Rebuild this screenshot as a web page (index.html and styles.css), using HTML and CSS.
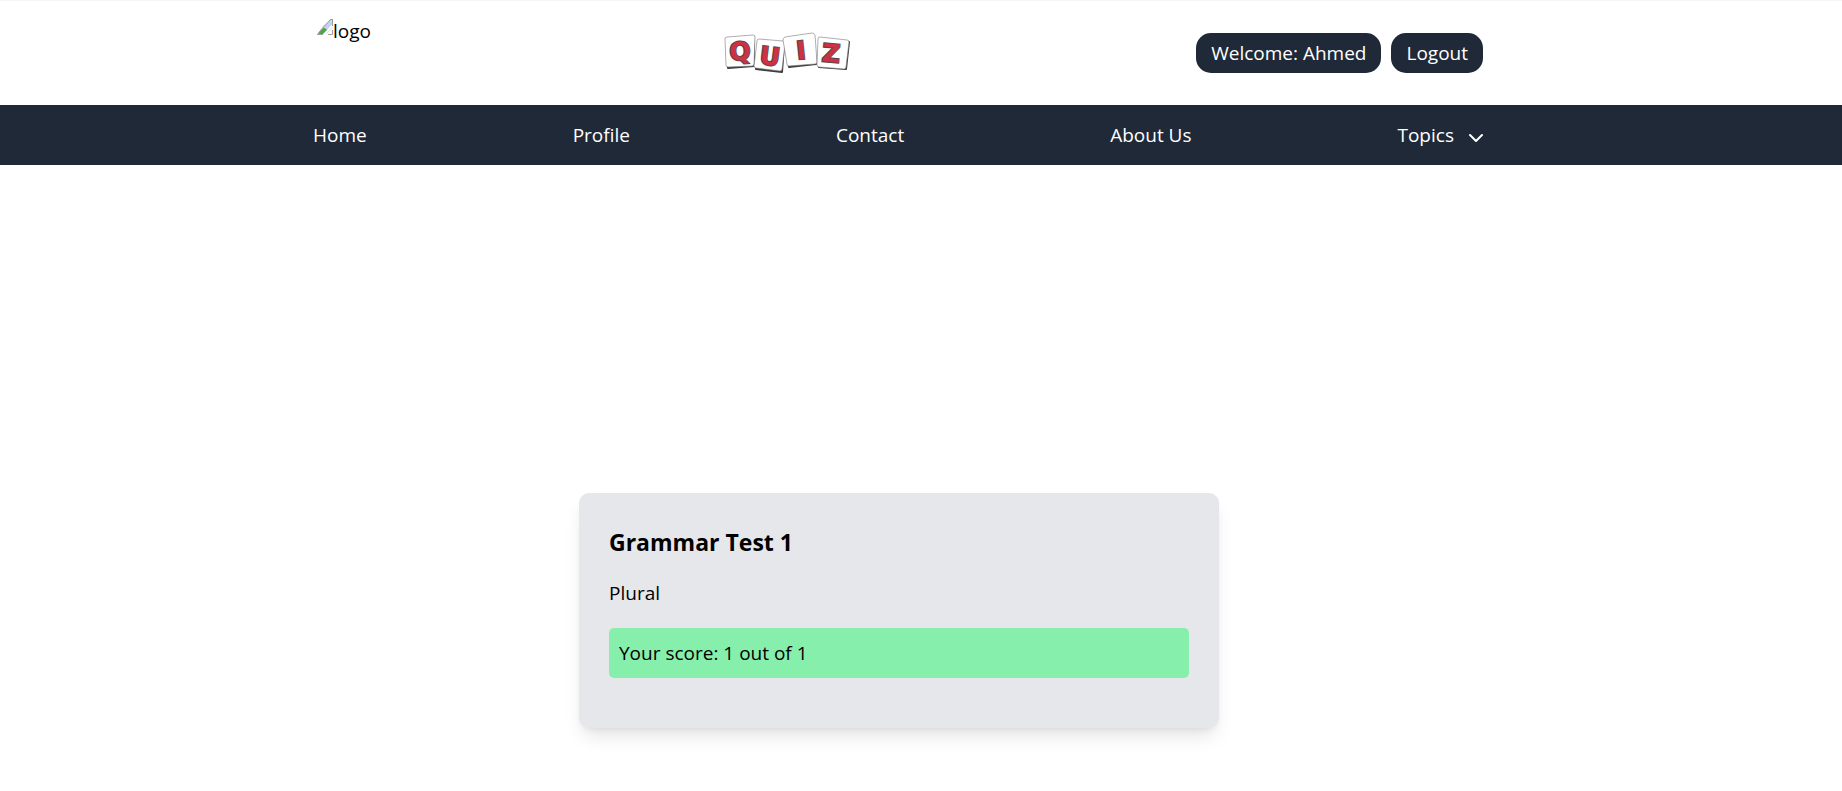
FILE: index.html
```html
<!DOCTYPE html>
<html lang="en">
<head>
  <meta charset="utf-8">
  <meta name="viewport" content="width=device-width, initial-scale=1">
  <title>Quiz</title>
  <link rel="stylesheet" href="styles.css">
</head>
<body>
  <header class="header">
    <div class="container header-row">
      <a class="logo" href="#">
        <svg class="logo-icon" viewBox="0 0 16 16" aria-hidden="true">
          <path d="M13 1h2.500v8L9 15H1L6 7z" fill="#c3d3f3"/>
          <path d="M1 15Q4 9 7 9Q9 9 10 11L6 15z" fill="#4fa83d"/>
          <path d="M15.500 8L8 15.500H6L15.500 5z" fill="#fff"/>
          <path d="M1 14.500L13 1M15.500 1V7M13 .5H16M0 15.500H6M11 15.500H15.500V11" fill="none" stroke="#a0a0a4"/>
        </svg><span>logo</span>
      </a>
      <svg class="quiz-logo" viewBox="0 0 128 44" role="img" aria-label="Quiz">
        <g fill="#3c3c3c" stroke="#3c3c3c" stroke-width="2" stroke-linejoin="round">
          <path d="M4 8L31 6L31 35L5 37z"/>
          <path d="M36 10L61 13L59 41L33 38z"/>
          <path d="M63 8L90 4L93 33L66 36z"/>
          <path d="M98 8L126 11L123 38L96 36z"/>
        </g>
        <g fill="#fff" stroke="#777" stroke-width=".6">
          <path d="M4 6L30 4Q32 4 32 6L31 33Q31 35 29 35L5 36Q3 36 3 34L2 8Q2 6 4 6z"/>
          <path d="M36 8L60 10Q62 11 62 13L59 38Q59 40 57 40L33 37Q31 37 31 35L34 10Q34 8 36 8z"/>
          <path d="M62 6L89 2Q91 2 92 4L94 31Q94 33 92 33L66 35Q64 35 64 33L60 9Q60 7 62 6z"/>
          <path d="M97 6L124 9Q126 9 126 11L123 36Q123 38 121 38L96 36Q94 36 94 34L95 8Q95 6 97 6z"/>
        </g>
        <g class="quiz-letters">
          <text x="17" y="29" transform="rotate(-3 17 20)">Q</text>
          <text x="47" y="34" transform="rotate(7 47 25)">U</text>
          <text x="78" y="28" transform="rotate(-6 78 19)">I</text>
          <text x="108" y="31" transform="rotate(5 108 22)">Z</text>
        </g>
      </svg>
      <div class="actions">
        <button class="pill" type="button">Welcome: Ahmed</button>
        <button class="pill" type="button">Logout</button>
      </div>
    </div>
  </header>
  <nav class="nav">
    <div class="container nav-row">
      <a href="#">Home</a>
      <a href="#">Profile</a>
      <a href="#">Contact</a>
      <a href="#">About Us</a>
      <button class="topics" type="button">Topics
        <svg class="chevron" viewBox="0 0 14 10" aria-hidden="true"><path d="M1 2L7 8L13 2"/></svg>
      </button>
    </div>
  </nav>
  <main class="main">
    <section class="card">
      <h1>Grammar Test 1</h1>
      <p class="subject">Plural</p>
      <p class="score">Your score: 1 out of 1</p>
    </section>
  </main>
</body>
</html>
```
FILE: styles.css
```css
* {
  box-sizing: border-box;
}

body {
  margin: 0;
  background: #fff;
  color: #000;
  font-family: "Segoe UI", "Open Sans", "Noto Sans", sans-serif;
  font-size: 19px;
  line-height: 30px;
}

a {
  color: inherit;
  text-decoration: none;
}

button {
  border: 0;
  color: #fff;
  font: inherit;
  cursor: pointer;
}

.header,
.nav {
  padding-right: 46px;
}

.header {
  border-top: 1px solid #f3f6f7;
}

.container {
  max-width: 1170px;
  margin: 0 auto;
}

.header-row {
  display: flex;
  justify-content: space-between;
  align-items: center;
  height: 104px;
}

.logo {
  display: flex;
  align-self: flex-start;
  width: 64px;
  padding: 15px 4px;
}

.logo-icon {
  flex: none;
  width: 16px;
  height: 16px;
  margin-top: 3px;
}

.quiz-logo {
  width: 128px;
  height: 44px;
}

.quiz-letters {
  fill: #cf3043;
  stroke: #55484d;
  stroke-width: 2px;
  paint-order: stroke;
  font-family: "DejaVu Sans", sans-serif;
  font-size: 25px;
  font-weight: 700;
  text-anchor: middle;
}

.actions {
  display: flex;
  gap: 10px;
}

.pill {
  padding: 5px 15px;
  border-radius: 15px;
  background: #1f2937;
}

.nav {
  background: #1f2937;
  color: #fff;
}

.nav-row {
  display: flex;
  justify-content: space-between;
  align-items: center;
  padding: 15px 0;
}

.topics {
  display: flex;
  align-items: center;
  gap: 15px;
  padding: 0;
  background: none;
}

.chevron {
  width: 14px;
  height: 10px;
  margin-top: 6px;
  fill: none;
  stroke: #fff;
  stroke-width: 2px;
  stroke-linecap: round;
  stroke-linejoin: round;
}

.main {
  padding: 328px 44px 60px 0;
}

.card {
  max-width: 640px;
  margin: 0 auto;
  padding: 30px 30px 50px;
  border-radius: 10px;
  background: #e5e7eb;
  box-shadow: 0 12px 19px -4px rgba(0, 0, 0, .1), 0 5px 8px -5px rgba(0, 0, 0, .1);
}

.card h1 {
  margin: 0 0 17px;
  font-size: 23px;
  font-weight: 700;
  line-height: 38px;
}

.subject {
  margin: 0 0 20px;
}

.score {
  margin: 0;
  padding: 10px;
  border-radius: 5px;
  background: #86efac;
}
```
